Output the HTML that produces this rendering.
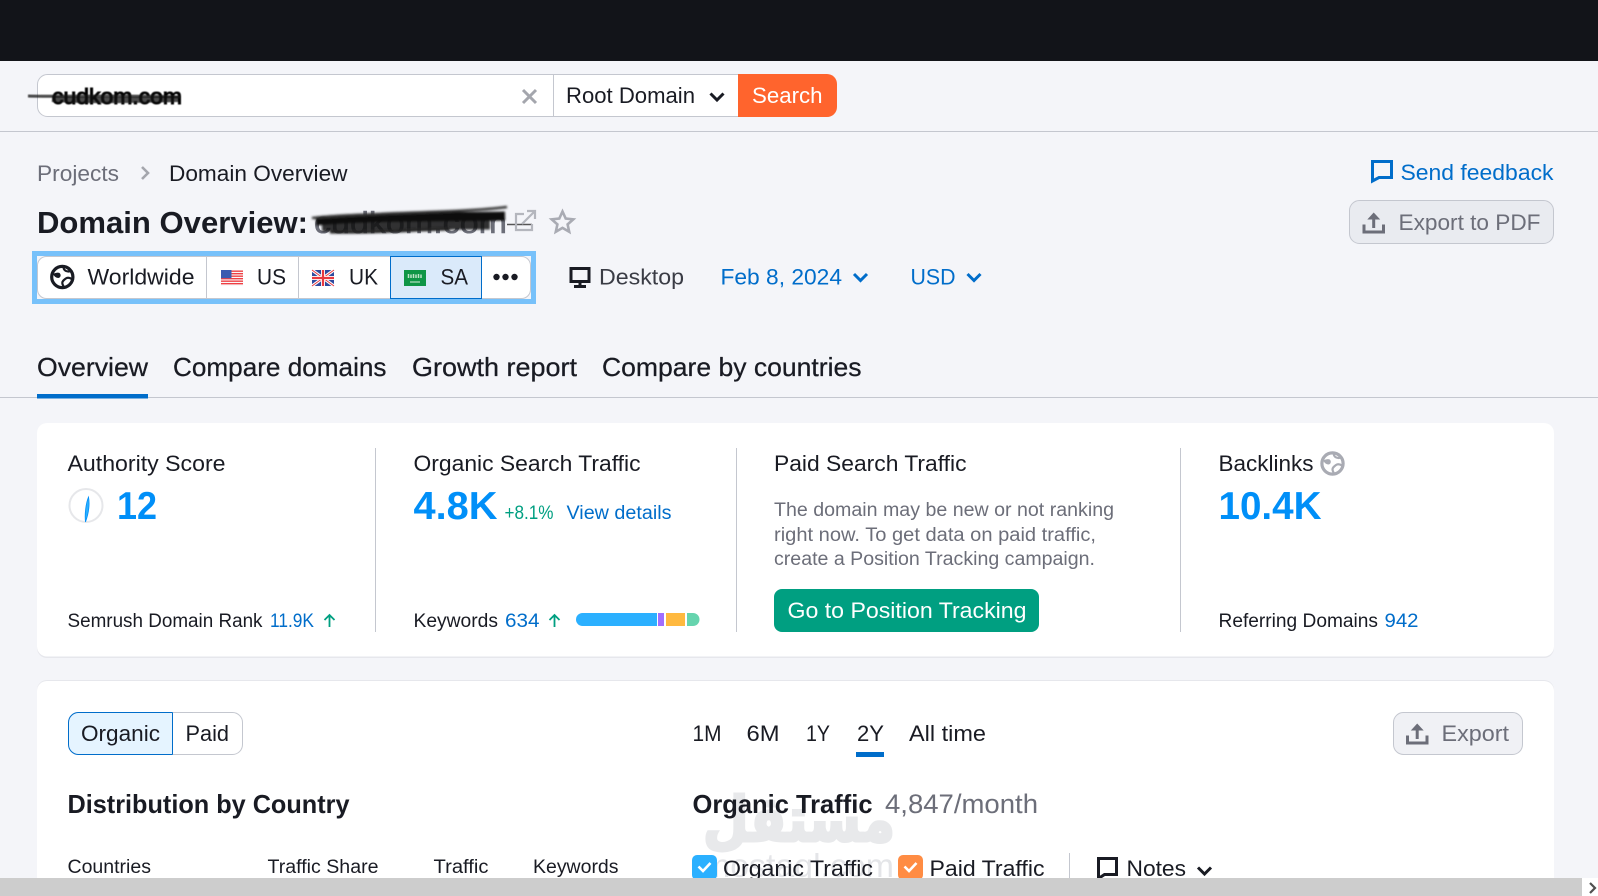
<!DOCTYPE html>
<html lang="en">
<head>
<meta charset="utf-8">
<title>Domain Overview</title>
<style>
html,body{margin:0;padding:0;width:1598px;height:896px;overflow:hidden;background:#f4f5f9}
svg{display:block;position:absolute;left:0;top:0}
text{font-family:"Liberation Sans",Arial,sans-serif;fill:#191b23;font-size:22px}
.s{font-size:19px}
.g{fill:#6c6e79}
.b{fill:#006dca}
.n{fill:#008ff8;font-weight:700;font-size:39px}
.h{font-size:26px;font-weight:700}
.tab{font-size:26px;stroke:#191b23;stroke-width:.25}
</style>
</head>
<body>
<svg xmlns="http://www.w3.org/2000/svg" width="1598" height="896" viewBox="0 0 1598 896">
<defs>
<filter id="bl" x="-10%" y="-50%" width="120%" height="200%"><feGaussianBlur stdDeviation="1"/></filter>
<filter id="bs" x="-10%" y="-50%" width="120%" height="200%"><feGaussianBlur stdDeviation=".6"/></filter>
<g id="up"><path d="M1.500 12.500v7.500h19.500v-7.500" fill="none" stroke="currentColor" stroke-width="3"/><path d="M11.200 16V5" fill="none" stroke="currentColor" stroke-width="3"/><path d="M4.800 7.500L11.200 0.500L17.700 7.500Z" fill="currentColor"/></g>
<g id="globe"><circle r="10.600" fill="none" stroke="currentColor" stroke-width="3.200"/><path d="M-9.500-3C-6-4.500-3-5-2-3C-1-1-2.500 1-4 1C-6 1-8-.5-9.500-3Z" fill="currentColor"/><path d="M1-10C1.500-7 3-5.500 6-5.500L9-6M9.500 2C7 .5 5 .5 3.500 1.500C1.500 3 0 4 0 6C0 7.500 1 9 1.500 10" fill="none" stroke="currentColor" stroke-width="2.200"/></g>
</defs>

<!-- top bar -->
<rect width="1598" height="61" fill="#121419"/>

<!-- search row -->
<rect x="37.500" y="74.500" width="719" height="42" rx="10" fill="#fff" stroke="#c4c7cf"/>
<rect x="739" y="74" width="98" height="43" rx="10" fill="#ff642d"/>
<rect x="738" y="74" width="20" height="43" fill="#ff642d"/>
<path d="M553.500 74v43" stroke="#c4c7cf"/>
<path d="M523 90l13 13M536 90l-13 13" stroke="#a4a6ad" stroke-width="3" fill="none"/>
<text x="566" y="103" textLength="129" lengthAdjust="spacingAndGlyphs">Root Domain</text>
<path d="M710.500 93.500l6.500 6.500 6.500-6.500" fill="none" stroke="#191b23" stroke-width="3"/>
<text x="752" y="103" textLength="70.500" lengthAdjust="spacingAndGlyphs" style="fill:#fff">Search</text>
<g filter="url(#bs)">
<text x="52" y="104" textLength="130" lengthAdjust="spacingAndGlyphs" style="fill:#050505;stroke:#050505;stroke-width:1">cudkom.com</text>
<path d="M28 96C70 97 140 95 180 97" stroke="#111" stroke-width="3" fill="none" opacity=".75"/>
<path d="M52 99C90 101 140 100 178 99" stroke="#111" stroke-width="6" fill="none" opacity=".75"/>
</g>
<path d="M0 131.500H1598" stroke="#c4c7cf"/>

<!-- breadcrumbs -->
<text x="37" y="181" textLength="82" lengthAdjust="spacingAndGlyphs" class="g">Projects</text>
<path d="M142 167l6 6-6 6" fill="none" stroke="#a4a6ad" stroke-width="2.600"/>
<text x="169" y="181" textLength="178.500" lengthAdjust="spacingAndGlyphs">Domain Overview</text>
<path d="M1372.500 161.500H1391.500V177.500H1379L1372.500 181Z" fill="none" stroke="#006dca" stroke-width="3"/>
<text x="1400.500" y="180" textLength="153" lengthAdjust="spacingAndGlyphs" class="b">Send feedback</text>

<!-- export to pdf -->
<rect x="1349.500" y="200.500" width="204" height="43" rx="10" fill="#e9ebf0" stroke="#c4c7cf"/>
<use href="#up" x="1362.500" y="212" style="color:#6c6e79"/>
<text x="1398.500" y="230" textLength="142" lengthAdjust="spacingAndGlyphs" class="g">Export to PDF</text>

<!-- heading -->
<text x="37" y="233" textLength="271" lengthAdjust="spacingAndGlyphs" style="font-size:31px;font-weight:700">Domain Overview:</text>
<text x="314" y="233" textLength="193" lengthAdjust="spacingAndGlyphs" class="g" style="font-size:31px;font-weight:400;stroke:#6c6e79;stroke-width:.6">cudkom.com</text>
<g filter="url(#bl)">
<path d="M316 221C360 216 450 217 505 216" stroke="#0c0c0c" stroke-width="9" fill="none"/>
<path d="M322 227C380 225 440 225 490 225" stroke="#0c0c0c" stroke-width="9" fill="none" opacity=".85"/>
<path d="M312 218C380 212 460 213 507 207" stroke="#333" stroke-width="2.500" fill="none"/>
<path d="M330 232C370 233 410 230 450 229" stroke="#222" stroke-width="3" fill="none"/>
</g>
<path d="M507 224.500H532" stroke="#555" stroke-width="1.500"/>
<path d="M524 214h-8v16h16v-6M522 224l12-12M527 211h8v8" fill="none" stroke="#b4b6bd" stroke-width="2.200"/>
<path d="M562.500 211.500l3.200 7 7.600.8-5.700 5.100 1.600 7.400-6.700-3.900-6.700 3.900 1.600-7.400-5.700-5.100 7.600-.8z" fill="none" stroke="#a9abb3" stroke-width="2.600"/>

<!-- location selector -->
<rect x="34.500" y="253.500" width="499" height="48" fill="none" stroke="#77c1fa" stroke-width="5"/>
<rect x="37.500" y="256.500" width="493" height="42" rx="9" fill="#fff" stroke="#c4c7cf"/>
<path d="M206.500 256v42M298.500 256v42" stroke="#c4c7cf"/>
<rect x="390.500" y="256.500" width="91" height="42" fill="#daeafa" stroke="#006dca"/>
<use href="#globe" x="62.300" y="277" style="color:#191b23"/>
<text x="87.500" y="284.500" textLength="107" lengthAdjust="spacingAndGlyphs">Worldwide</text>
<g>
<rect x="221" y="270" width="22" height="16" fill="#f9f9f9"/>
<path d="M221 271.200h22M221 273.700h22M221 276.200h22M221 278.700h22M221 281.200h22M221 283.700h22" stroke="#ef3f44" stroke-width="1.400"/>
<rect x="221" y="270" width="10.500" height="8.200" fill="#3a5bb0"/>
</g>
<text x="257" y="284.500" textLength="29" lengthAdjust="spacingAndGlyphs">US</text>
<g>
<rect x="312" y="270" width="22" height="16" fill="#2e4a9e"/>
<path d="M312 270l22 16M334 270l-22 16" stroke="#fff" stroke-width="3"/>
<path d="M312 270l22 16M334 270l-22 16" stroke="#e8383f" stroke-width="1"/>
<path d="M323 270v16M312 278h22" stroke="#fff" stroke-width="4"/>
<path d="M323 270v16M312 278h22" stroke="#e8383f" stroke-width="2.200"/>
</g>
<text x="349" y="284.500" textLength="29" lengthAdjust="spacingAndGlyphs">UK</text>
<g>
<rect x="404" y="270" width="22" height="16" fill="#0f9646"/>
<path d="M408.500 274v4M411 274.500v3.500M413.500 274v4M416 274.500v3.500M418.500 274v4M421 274.500v3.500" stroke="#bfe3c8" stroke-width="1.500"/>
<path d="M410 282h10" stroke="#d6eeda" stroke-width="1"/>
</g>
<text x="440.500" y="284.500" textLength="27.500" lengthAdjust="spacingAndGlyphs">SA</text>
<circle cx="496.500" cy="277" r="3.200" fill="#191b23"/><circle cx="505.500" cy="277" r="3.200" fill="#191b23"/><circle cx="514.500" cy="277" r="3.200" fill="#191b23"/>

<path d="M571 268.500h18v13h-18zM574 286.500h12M580 282v4" fill="none" stroke="#191b23" stroke-width="3"/>
<text x="599" y="284.500" textLength="85" lengthAdjust="spacingAndGlyphs" style="fill:#3a3c45">Desktop</text>
<text x="720.500" y="284.500" textLength="121.500" lengthAdjust="spacingAndGlyphs" class="b">Feb 8, 2024</text>
<path d="M854 274l6.500 6.500 6.500-6.500" fill="none" stroke="#006dca" stroke-width="3"/>
<text x="910.500" y="284.500" textLength="45" lengthAdjust="spacingAndGlyphs" class="b">USD</text>
<path d="M967.500 274l6.500 6.500 6.500-6.500" fill="none" stroke="#006dca" stroke-width="3"/>

<!-- tabs -->
<text x="37" y="376" textLength="111" lengthAdjust="spacingAndGlyphs" class="tab">Overview</text>
<text x="173" y="376" textLength="213.500" lengthAdjust="spacingAndGlyphs" class="tab">Compare domains</text>
<text x="412" y="376" textLength="165" lengthAdjust="spacingAndGlyphs" class="tab">Growth report</text>
<text x="602" y="376" textLength="259.500" lengthAdjust="spacingAndGlyphs" class="tab">Compare by countries</text>
<path d="M0 397.500H1598" stroke="#c4c7cf"/>
<rect x="37" y="394" width="111" height="4.500" fill="#006dca"/>

<!-- card 1 -->
<rect x="37" y="423" width="1517" height="234" rx="10" fill="#e6e7ec" transform="translate(0 1)"/>
<rect x="37" y="423" width="1517" height="233.500" rx="10" fill="#fff"/>
<path d="M375.500 448v184M736.500 448v184M1180.500 448v184" stroke="#c4c7cf"/>

<text x="67.500" y="471" textLength="158" lengthAdjust="spacingAndGlyphs">Authority Score</text>
<circle cx="86" cy="505.500" r="16.500" fill="#fff" stroke="#e6e7ea" stroke-width="2"/>
<path d="M88.500 497C90 505 88 515 85.500 522C84.500 514 86 503 88.500 497Z" fill="#2bb0ff" stroke="#008ff8" stroke-width=".8"/>
<text x="117" y="519" textLength="40" lengthAdjust="spacingAndGlyphs" class="n">12</text>
<text x="67.500" y="627" textLength="195" lengthAdjust="spacingAndGlyphs" class="s">Semrush Domain Rank</text>
<text x="270" y="627" textLength="44" lengthAdjust="spacingAndGlyphs" class="s b">11.9K</text>
<path d="M329.500 627v-12M324.500 620l5-5 5 5" fill="none" stroke="#009f81" stroke-width="1.800"/>

<text x="413.500" y="471" textLength="227" lengthAdjust="spacingAndGlyphs">Organic Search Traffic</text>
<text x="413.500" y="519" textLength="84" lengthAdjust="spacingAndGlyphs" class="n">4.8K</text>
<text x="504.500" y="519" textLength="49" lengthAdjust="spacingAndGlyphs" class="s" style="fill:#009f81">+8.1%</text>
<text x="566.500" y="519" textLength="105" lengthAdjust="spacingAndGlyphs" class="s b">View details</text>
<text x="413.500" y="627" textLength="84.500" lengthAdjust="spacingAndGlyphs" class="s">Keywords</text>
<text x="505" y="627" textLength="34.500" lengthAdjust="spacingAndGlyphs" class="s b">634</text>
<path d="M554.500 627v-12M549.500 620l5-5 5 5" fill="none" stroke="#009f81" stroke-width="1.800"/>
<path d="M582.500 613H657V626H582.500A6.500 6.500 0 0 1 582.500 613Z" fill="#2bb0ff"/>
<rect x="658" y="613" width="6" height="13" fill="#a16eff"/>
<rect x="666" y="613" width="19" height="13" fill="#ffb93f"/>
<path d="M687 613H693A6.500 6.500 0 0 1 693 626H687Z" fill="#66d4ae"/>

<text x="774" y="471" textLength="192.500" lengthAdjust="spacingAndGlyphs">Paid Search Traffic</text>
<text x="774" y="516" textLength="340" lengthAdjust="spacingAndGlyphs" class="s g">The domain may be new or not ranking</text>
<text x="774" y="541" textLength="322" lengthAdjust="spacingAndGlyphs" class="s g">right now. To get data on paid traffic,</text>
<text x="774" y="565" textLength="321" lengthAdjust="spacingAndGlyphs" class="s g">create a Position Tracking campaign.</text>
<rect x="774" y="589" width="265" height="43" rx="8" fill="#009f81"/>
<text x="787.500" y="618" textLength="239" lengthAdjust="spacingAndGlyphs" style="fill:#fff">Go to Position Tracking</text>

<text x="1218.500" y="471" textLength="95" lengthAdjust="spacingAndGlyphs">Backlinks</text>
<use href="#globe" x="1332.500" y="463.500" style="color:#a9abb3"/>
<text x="1218.500" y="519" textLength="103" lengthAdjust="spacingAndGlyphs" class="n">10.4K</text>
<text x="1218.500" y="627" textLength="159.500" lengthAdjust="spacingAndGlyphs" class="s">Referring Domains</text>
<text x="1384.500" y="627" textLength="34" lengthAdjust="spacingAndGlyphs" class="s b">942</text>

<!-- card 2 -->
<rect x="37" y="681" width="1517" height="230" rx="10" fill="#e6e7ec" transform="translate(0 -1)"/>
<rect x="37" y="681" width="1517" height="230" rx="10" fill="#fff"/>

<path d="M172.500 712.500H78A10 10 0 0 0 68.500 722.500V744.500A10 10 0 0 0 78 754.500H172.500Z" fill="#e5f4ff" stroke="#006dca"/>
<path d="M172.500 712.500H232.500A10 10 0 0 1 242.500 722.500V744.500A10 10 0 0 1 232.500 754.500H172.500" fill="#fff" stroke="#c4c7cf"/>
<path d="M172.500 712.500V754.500" stroke="#006dca"/>
<text x="81" y="741" textLength="79" lengthAdjust="spacingAndGlyphs">Organic</text>
<text x="185.500" y="741" textLength="43.500" lengthAdjust="spacingAndGlyphs">Paid</text>
<text x="67.500" y="813" textLength="282" lengthAdjust="spacingAndGlyphs" class="h">Distribution by Country</text>
<text x="67.500" y="873" textLength="83.500" lengthAdjust="spacingAndGlyphs" class="s">Countries</text>
<text x="267.500" y="873" textLength="111" lengthAdjust="spacingAndGlyphs" class="s">Traffic Share</text>
<text x="433.500" y="873" textLength="55" lengthAdjust="spacingAndGlyphs" class="s">Traffic</text>
<text x="533" y="873" textLength="85.500" lengthAdjust="spacingAndGlyphs" class="s">Keywords</text>

<text x="692.500" y="741" textLength="29" lengthAdjust="spacingAndGlyphs">1M</text>
<text x="746.500" y="741" textLength="33" lengthAdjust="spacingAndGlyphs">6M</text>
<text x="806" y="741" textLength="24" lengthAdjust="spacingAndGlyphs">1Y</text>
<text x="857" y="741" textLength="27" lengthAdjust="spacingAndGlyphs">2Y</text>
<text x="909" y="741" textLength="77" lengthAdjust="spacingAndGlyphs">All time</text>
<rect x="856" y="752" width="28" height="5" fill="#006dca"/>

<!-- watermark -->
<text x="703" y="841" textLength="192" lengthAdjust="spacingAndGlyphs" style="font-family:'DejaVu Sans',sans-serif;font-size:62px;font-weight:700;fill:#e8e9eb;stroke:#e8e9eb;stroke-width:3">مستقل</text>
<text x="702" y="877" textLength="192" lengthAdjust="spacingAndGlyphs" style="font-size:33px;fill:#e4e5e8">mostaql.com</text>

<text x="692.500" y="813" textLength="180" lengthAdjust="spacingAndGlyphs" class="h">Organic Traffic</text>
<text x="885" y="813" textLength="153" lengthAdjust="spacingAndGlyphs" class="g" style="font-size:27px">4,847/month</text>

<rect x="692" y="855" width="25" height="25" rx="5" fill="#2bb0ff"/>
<path d="M698.500 866.500l4.500 4.500 7.500-8" fill="none" stroke="#fff" stroke-width="2.600"/>
<text x="723" y="876" textLength="150" lengthAdjust="spacingAndGlyphs">Organic Traffic</text>
<rect x="898" y="855" width="25" height="25" rx="5" fill="#ff8c43"/>
<path d="M904.500 866.500l4.500 4.500 7.500-8" fill="none" stroke="#fff" stroke-width="2.600"/>
<text x="929.500" y="876" textLength="115" lengthAdjust="spacingAndGlyphs">Paid Traffic</text>
<path d="M1069.500 853v26" stroke="#c4c7cf"/>
<path d="M1098.500 858.500h18v16h-12l-6 4z" fill="none" stroke="#191b23" stroke-width="3"/>
<text x="1126.500" y="876" textLength="59.500" lengthAdjust="spacingAndGlyphs">Notes</text>
<path d="M1198 867.500l6.500 6.500 6.500-6.500" fill="none" stroke="#191b23" stroke-width="3"/>

<!-- export -->
<rect x="1393.500" y="712.500" width="129" height="42" rx="10" fill="#f0f1f5" stroke="#c4c7cf"/>
<use href="#up" x="1406" y="723" style="color:#6c6e79"/>
<text x="1441.500" y="741" textLength="67.500" lengthAdjust="spacingAndGlyphs" class="g">Export</text>

<!-- horizontal scrollbar -->
<rect x="0" y="878" width="1582" height="18" fill="#cdcdcd"/>
<rect x="1582" y="878" width="16" height="18" fill="#fff"/>
<path d="M1590 883l5 5-5 5" fill="none" stroke="#505050" stroke-width="2.200"/>
</svg>
</body>
</html>
